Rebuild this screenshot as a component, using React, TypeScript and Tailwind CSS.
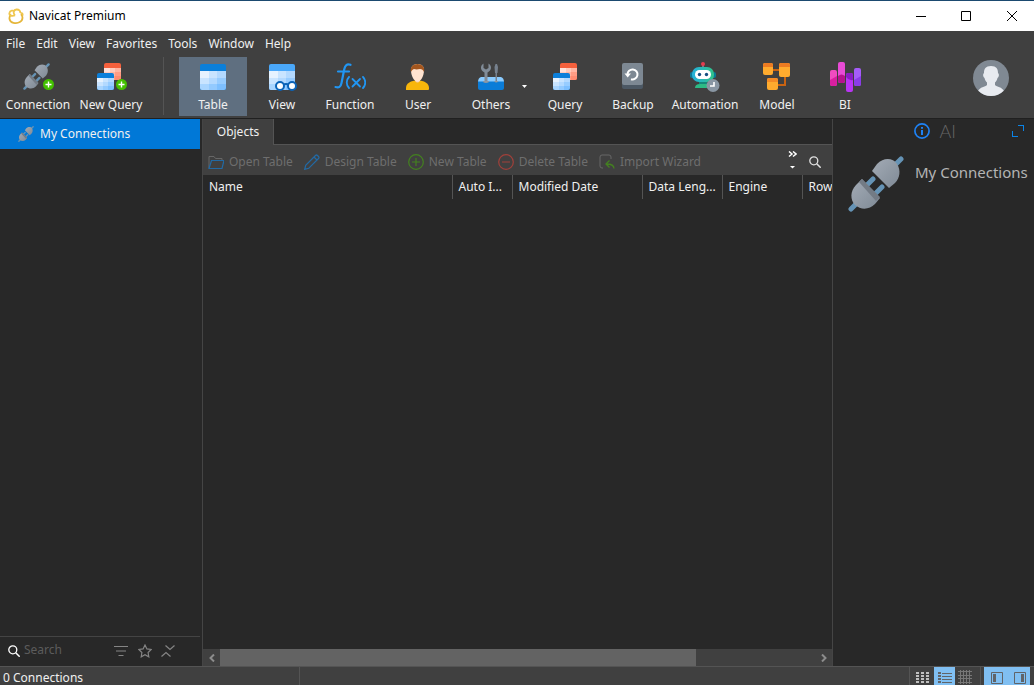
import type { ReactNode } from "react"
import clsx from "clsx"

function PlugIcon({ className }: { className?: string }) {
  return (
    <svg viewBox="0 0 56 56" className={className} fill="none" aria-hidden="true">
      <defs>
        <linearGradient id="plug" x1="0" y1="0" x2="1" y2="1">
          <stop offset="0" stopColor="#a3abb5" />
          <stop offset="1" stopColor="#7f8a96" />
        </linearGradient>
      </defs>
      <path d="M3 53l6-6M47 9l6-6M19 29l6-6M28 37l6-6" stroke="#6593b5" strokeWidth="5" strokeLinecap="round" />
      <path d="M24 15 29 8C36 1 45 2 49 8c4 6 3 14-2 19l-6 5z" fill="url(#plug)" />
      <path d="M14 23 8 29C2 35 2 44 7 49c6 5 14 5 20-1l5-6z" fill="url(#plug)" />
      <path d="M11 26l3-3 18 18-4 4z" fill="#737b85" />
    </svg>
  )
}

function TableGrid({ x, y, size, color = "blue" }: { x: number; y: number; size: number; color?: "blue" | "red" | "sky" }) {
  const head = { blue: "#0b7fda", red: "#f5603c", sky: "#4aa8fa" }[color]
  const cells =
    color === "red"
      ? ["#ffe2da", "#ffcbbd", "#ffb5a2", "#ffcbbd", "#ffb5a2", "#ff9c84", "#ffb5a2", "#ff9c84", "#ff8c72"]
      : ["#e6f2ff", "#c9e4ff", "#b3d9ff", "#c9e4ff", "#b3d9ff", "#97ccff", "#a9d5ff", "#93caff", "#7dbfff"]
  const top = size * 0.28
  const w = size / 3
  const h = (size - top) / 3
  const clip = `grid-${color}-${x}-${y}-${size}`
  return (
    <g>
      <clipPath id={clip}>
        <rect x={x} y={y} width={size} height={size} rx="2" />
      </clipPath>
      <g clipPath={`url(#${clip})`} shapeRendering="crispEdges">
        <rect x={x} y={y} width={size} height={size} fill={head} />
        {cells.map((fill, i) => (
          <rect key={i} x={x + (i % 3) * w} y={y + top + Math.floor(i / 3) * h} width={w} height={h} fill={fill} />
        ))}
      </g>
    </g>
  )
}

function PlusBadge() {
  return (
    <>
      <circle cx="26.5" cy="23.5" r="5.5" fill="#43c000" />
      <path d="M26.5 20.500v6M23.500 23.500h6" stroke="#fff" strokeWidth="1.4" />
    </>
  )
}

function Icon({ children }: { children: ReactNode }) {
  return (
    <svg viewBox="0 0 32 32" className="size-8 shrink-0" fill="none" aria-hidden="true">
      {children}
    </svg>
  )
}

const ConnectionIcon = (
  <Icon>
    <svg x="1" y="2" width="27" height="27">
      <PlugIcon />
    </svg>
    <PlusBadge />
  </Icon>
)

const NewQueryIcon = (
  <Icon>
    <TableGrid x={9} y={2} size={17} color="red" />
    <TableGrid x={2} y={12} size={17} />
    <PlusBadge />
  </Icon>
)

const TableIcon = (
  <Icon>
    <TableGrid x={3} y={3} size={26} />
  </Icon>
)

const ViewIcon = (
  <Icon>
    <TableGrid x={3} y={3} size={26} color="sky" />
    <g fill="#fff" stroke="#0a63b8" strokeWidth="2">
      <path d="M17 24q3-2 6 0" fill="none" />
      <circle cx="14" cy="25" r="4" />
      <circle cx="26" cy="25" r="4" />
    </g>
  </Icon>
)

const FunctionIcon = (
  <Icon>
    <g stroke="#2196f3" strokeWidth="2.2" strokeLinecap="round">
      <path d="M16.500 3.800C13 2.600 11 4 10.200 8.500L7.500 22c-.8 4-2.500 5-6 4M4 10.500h11" />
      <path d="M15 16c-3 3-3 8 0 11M29 16c3 3 3 8 0 11" strokeWidth="1.800" />
      <path d="M18.500 18l7.500 7.500M26 18l-7.500 7.500" strokeWidth="1.800" />
    </g>
  </Icon>
)

const UserIcon = (
  <Icon>
    <path d="M4 29v-2c0-5 5-7.500 11.500-7.500S27 22 27 27v1q0 1-1 1z" fill="#f8b60b" />
    <path d="M13 17h5v3q-2.500 3-5 0z" fill="#f6cfa8" />
    <path d="M9 9c0-4 3-6 6.500-6S22 5 22 9c0 6-3 11.500-6.500 11.500S9 15 9 9z" fill="#ffe3d0" />
    <path d="M9 11C7.800 6 11 3 15.500 3S23.200 6 22 11c-.8-2-2-3-4-3-3 .5-4 .5-6 0-1.500.5-2.500 1.500-3 3z" fill="#a3561e" />
  </Icon>
)

const OthersIcon = (
  <Icon>
    <path d="M6 16h20q3 1 3 5H3q0-4 3-5z" fill="#8acbff" />
    <path
      d="M9.500 22V11.500C5 9.500 5 4.500 8.500 2.500v4.500l2.500 1.500L13.500 7V2.500c3.500 2 3.500 7-1 9V22z"
      fill="#818c98"
    />
    <path d="M20.500 3h1.500l1 3-.500 6h-.500v9h-1.500v-9H20l-.5-6z" fill="#76818e" />
    <path d="M3 20.500h26V27q0 2-2 2H5q-2 0-2-2z" fill="#0a7cd8" />
    <path d="M8 20h6v1q-3 2-6 0zM19 20h4.500q-2.300 3-4.500 0z" fill="#8d97a3" />
  </Icon>
)

const QueryIcon = (
  <Icon>
    <TableGrid x={11} y={2} size={17} color="red" />
    <TableGrid x={4} y={12} size={17} />
  </Icon>
)

const BackupIcon = (
  <Icon>
    <rect x="5" y="8" width="21" height="20" rx="2" fill="#4c5864" />
    <rect x="5" y="2" width="21" height="22" rx="2" fill="#7d8893" />
    <path d="M10.500 13.500A5 5 0 1 1 14 18.200" stroke="#fff" strokeWidth="2" />
    <path d="M7.500 12.500h6.500l-3.300 4z" fill="#fff" />
  </Icon>
)

const AutomationIcon = (
  <Icon>
    <path d="M14 3v5" stroke="#8a949e" strokeWidth="1.500" />
    <circle cx="14" cy="3" r="2" fill="#e43d4f" />
    <rect x="1" y="11" width="26" height="6" rx="2" fill="#0b7895" />
    <linearGradient id="robot">
      <stop offset="0" stopColor="#24b0dc" />
      <stop offset="1" stopColor="#30c389" />
    </linearGradient>
    <rect x="3" y="6" width="22" height="15" rx="7" fill="url(#robot)" />
    <rect x="6" y="9" width="16" height="9" rx="4.500" fill="#fff" />
    <circle cx="10.500" cy="13.500" r="1.700" fill="#164f82" />
    <circle cx="17.500" cy="13.500" r="1.700" fill="#164f82" />
    <path d="M10 21h8v2H10z" fill="#15877a" />
    <path d="M6 27q0-4 5-4h8v4z" fill="#2cba85" />
    <circle cx="24" cy="24.500" r="6.500" fill="#8996a3" />
    <path d="M25 21v4h-4" stroke="#fff" strokeWidth="1.600" />
  </Icon>
)

const ModelIcon = (
  <Icon>
    <path d="M12 9h6M24 14v10h-7" stroke="#c96312" strokeWidth="2" />
    <rect x="2" y="2" width="10" height="12" rx="2" fill="#ffab2e" />
    <path d="M2 4q0-2 2-2h6q2 0 2 2v2H2z" fill="#ec7b22" />
    <rect x="18" y="2" width="11" height="14" rx="2" fill="#ffab2e" />
    <path d="M18 4q0-2 2-2h7q2 0 2 2v2H18z" fill="#ec7b22" />
    <rect x="6" y="17" width="11" height="12" rx="2" fill="#ffab2e" />
    <path d="M6 19q0-2 2-2h7q2 0 2 2v2H6z" fill="#f58a25" />
  </Icon>
)

const BiIcon = (
  <Icon>
    <rect x="1" y="9" width="7" height="16" rx="2" fill="#f04bc0" />
    <path d="M1 19l7-4v8q0 2-2 2H3q-2 0-2-2z" fill="#d81fa0" />
    <rect x="9" y="1" width="7" height="21" rx="2" fill="#e94bd6" />
    <path d="M9 15q3.500-3 7 0v5q0 2-2 2h-3q-2 0-2-2z" fill="#b8128e" />
    <rect x="17" y="12" width="7" height="19" rx="2" fill="#b935f4" />
    <path d="M17 14q0-2 2-2h3q2 0 2 2v5q-4 1-7-3z" fill="#8a1cc4" />
    <rect x="25" y="7" width="7" height="18" rx="2" fill="#a55cf8" />
    <path d="M25 19l7-4v8q0 2-2 2h-3q-2 0-2-2z" fill="#8a3ce8" />
  </Icon>
)

const objectTypes = [
  { label: "Table", icon: TableIcon, width: "w-[68px]", active: true },
  { label: "View", icon: ViewIcon, width: "w-[70px]" },
  { label: "Function", icon: FunctionIcon, width: "w-[66px]" },
  { label: "User", icon: UserIcon, width: "w-[70px]" },
  { label: "Others", icon: OthersIcon, width: "w-[76px]", menu: true },
  { label: "Query", icon: QueryIcon, width: "w-[72px]" },
  { label: "Backup", icon: BackupIcon, width: "w-16" },
  { label: "Automation", icon: AutomationIcon, width: "w-20" },
  { label: "Model", icon: ModelIcon, width: "w-16" },
  { label: "BI", icon: BiIcon, width: "w-[72px]" },
]

type ToolButtonProps = { label: string; icon: ReactNode; width: string; active?: boolean; menu?: boolean }

function ToolButton({ label, icon, width, active, menu }: ToolButtonProps) {
  return (
    <button
      type="button"
      className={clsx(
        "relative flex h-[59px] shrink-0 flex-col items-center gap-1 pt-1 whitespace-nowrap",
        width,
        active && "bg-[#5f6f80]",
      )}
    >
      {icon}
      <span>{label}</span>
      {menu && (
        <svg viewBox="0 0 5 3" className="absolute top-7 right-0.5 h-[3px] w-[5px]" aria-hidden="true">
          <path d="M0 0h5L2.500 3z" fill="#fff" />
        </svg>
      )}
    </button>
  )
}

function TitleBar() {
  return (
    <header className="flex h-[31px] shrink-0 items-center border-t border-[#1b4a70] bg-white pl-2 text-black">
      <svg viewBox="0 0 16 16" className="size-4" fill="none" stroke="#efc64e" strokeWidth="1.800" aria-hidden="true">
        <path d="M3.200 6.500C.3 9 1 13.800 5.500 14.800c5 1 9-1.300 9-5 0-1.500-.5-2.800-1.500-3.800" stroke="#e5b63a" />
        <path d="M7 7.500C3 8.800.8 7 1.500 4.800 2 2.500 5 2 7 3.500M7 7.500C4.800 5 5.500 1.800 8.500 1.500c2.500-.2 4 1.500 3.800 3.500M12.300 5c1.500-.500 2.700.500 2.200 2.500" />
      </svg>
      <h1 className="ml-[5px] flex-1">Navicat Premium</h1>
      <button type="button" aria-label="Minimize" className="flex h-full w-[45px] items-center justify-center">
        <svg viewBox="0 0 10 10" className="size-[10px]" stroke="#000" shapeRendering="crispEdges">
          <path d="M0 5.500h10" />
        </svg>
      </button>
      <button type="button" aria-label="Maximize" className="flex h-full w-[46px] items-center justify-center">
        <svg viewBox="0 0 10 10" className="size-[10px]" fill="none" stroke="#000">
          <path d="M.5.5h9v9h-9z" />
        </svg>
      </button>
      <button type="button" aria-label="Close" className="flex h-full w-[45px] items-center justify-center">
        <svg viewBox="0 0 10 10" className="size-[10px]" stroke="#000">
          <path d="M0 0l10 10M10 0L0 10" />
        </svg>
      </button>
    </header>
  )
}

function MainToolbar() {
  return (
    <div className="flex h-[61px] shrink-0 items-start bg-[#404040] pl-0.5">
      <ToolButton label="Connection" icon={ConnectionIcon} width="w-[72px]" />
      <ToolButton label="New Query" icon={NewQueryIcon} width="w-[74px]" />
      <div className="mx-[15px] h-[58px] w-px shrink-0 bg-[#545454]" />
      {objectTypes.map((item) => (
        <ToolButton key={item.label} {...item} />
      ))}
      <button type="button" aria-label="Account" className="mt-[3px] mr-[25px] ml-auto shrink-0">
        <svg viewBox="0 0 36 36" className="size-9">
          <clipPath id="avatar">
            <circle cx="18" cy="18" r="18" />
          </clipPath>
          <g clipPath="url(#avatar)">
            <rect width="36" height="36" fill="#808993" />
            <path
              d="M18 6c5.500 0 7 3 7 7 1.500 1 1 4-.5 5-.5 2-1.500 3.500-2.500 4.500V25c2 2 7 2 9 6v5H5v-5c2-4 7-4 9-6v-2.500c-1-1-2-2.500-2.500-4.500-1.500-1-2-4-.5-5 0-4 1.500-7 7-7z"
              fill="#e8ebf0"
            />
          </g>
        </svg>
      </button>
    </div>
  )
}

function SearchGlyph({ className }: { className?: string }) {
  return (
    <svg viewBox="0 0 12 12" className={clsx("size-3 shrink-0", className)} fill="none" stroke="currentColor" aria-hidden="true">
      <circle cx="4.800" cy="4.800" r="4" strokeWidth="1.300" />
      <path d="M7.700 7.700l4 4" strokeWidth="1.500" />
    </svg>
  )
}

function Sidebar() {
  return (
    <aside className="flex w-[202px] shrink-0 flex-col pr-0.5">
      <button type="button" className="flex h-[30px] items-center bg-[#0078d7] pl-[18px]">
        <PlugIcon className="size-4" />
        <span className="ml-1.5">My Connections</span>
      </button>
      <div className="mt-auto flex h-[30px] items-center border-t border-[#444] pb-px pl-2 text-[#858585]">
        <SearchGlyph className="text-white" />
        <input
          type="text"
          aria-label="Search"
          placeholder="Search"
          className="ml-1 w-[90px] bg-transparent pb-0.5 outline-none placeholder:text-[#5c5c5c]"
        />
        <button type="button" aria-label="Filter">
          <svg viewBox="0 0 14 10" className="h-[10px] w-[14px]" stroke="currentColor">
            <path d="M0 .5h14M2 5h10M4.500 9.500h5" />
          </svg>
        </button>
        <button type="button" aria-label="Favorites" className="ml-2.5">
          <svg viewBox="0 0 14 14" className="size-[14px]" fill="none" stroke="currentColor" strokeWidth="1.200">
            <path d="M7 1l1.900 3.900 4.300.600-3.100 3 .7 4.300L7 10.800l-3.800 2 .7-4.300-3.100-3 4.300-.6z" />
          </svg>
        </button>
        <button type="button" aria-label="Collapse all" className="ml-[9px]">
          <svg viewBox="0 0 14 14" className="size-[14px]" fill="none" stroke="currentColor" strokeWidth="1.200">
            <path d="M4.500 1.500l4.500 4 4.500-4M.5 12.500l4.500-4 4.500 4" />
          </svg>
        </button>
      </div>
    </aside>
  )
}

const actions = [
  {
    label: "Open Table",
    icon: (
      <>
        <path d="M1 14V2.500h5l1.500 2H14V6" stroke="#676767" />
        <path d="M1 14.500l2.500-8H16l-2 8z" stroke="#226aa5" strokeWidth="1.200" />
      </>
    ),
  },
  {
    label: "Design Table",
    icon: (
      <path d="M.7 15.300l1-4L11.500 1.500q1-1 2 0l1 1q1 1 0 2l-9.800 9.800zM10 3l3 3" stroke="#226aa5" strokeWidth="1.200" />
    ),
  },
  {
    label: "New Table",
    icon: (
      <path d="M8 .7a7.300 7.300 0 1 0 0 14.600A7.300 7.300 0 0 0 8 .7zM8 4v8M4 8h8" stroke="#43811f" strokeWidth="1.200" />
    ),
  },
  {
    label: "Delete Table",
    icon: <path d="M8 .7a7.300 7.300 0 1 0 0 14.600A7.300 7.300 0 0 0 8 .7zM4 8h8" stroke="#a0403a" strokeWidth="1.200" />,
  },
  {
    label: "Import Wizard",
    icon: (
      <>
        <path d="M4 14H3q-2 0-2-2V3q0-2 2-2h7q2 0 2 2v2" stroke="#676767" />
        <path d="M15 14.500c0-3-2-4.500-7.500-4.500M10.500 6.500L7 10l3.500 3.500" stroke="#43811f" strokeWidth="1.300" />
      </>
    ),
  },
]

const columns = [
  { label: "Name", width: "w-[249px]" },
  { label: "Auto Increment Value", width: "w-[60px]", short: "Auto I..." },
  { label: "Modified Date", width: "w-[130px]" },
  { label: "Data Length", width: "w-[80px]", short: "Data Leng..." },
  { label: "Engine", width: "w-[80px]" },
  { label: "Rows", width: "w-[80px]" },
]

function ObjectsPane() {
  return (
    <main className="flex min-w-0 flex-1 flex-col border-x border-[#454545]">
      <div role="tablist" className="flex h-[26px] shrink-0">
        <button type="button" role="tab" aria-selected="true" className="w-[71px] border-r border-[#545454] bg-[#404040]">
          Objects
        </button>
        <div className="flex-1 border-b border-[#545454]" />
      </div>
      <div className="flex h-[30px] shrink-0 items-center bg-[#404040] pt-1 pl-[5px] text-[#6e6e6e]">
        <div className="flex min-w-0 gap-[11px] overflow-hidden">
          {actions.map(({ label, icon }) => (
            <button key={label} type="button" disabled className="flex shrink-0 items-center gap-[5px] whitespace-nowrap">
              <svg viewBox="0 0 16 16" className="size-4" fill="none" aria-hidden="true">
                {icon}
              </svg>
              {label}
            </button>
          ))}
        </div>
        <button type="button" aria-label="More actions" className="ml-auto pb-1">
          <svg viewBox="0 0 9 18" className="h-[18px] w-[9px]" fill="none" stroke="#fff" strokeWidth="1.500">
            <path d="M1 .5l3 2.500-3 2.500M5 .5l3 2.500-3 2.500" />
            <path d="M2 15h5l-2.500 2.500z" fill="#fff" stroke="none" />
          </svg>
        </button>
        <button type="button" aria-label="Find object" className="mr-[11px] ml-3 text-[#e0e0e0]">
          <SearchGlyph />
        </button>
      </div>
      <div className="flex-1 overflow-hidden">
        <table className="w-[679px] table-fixed border-collapse text-left">
          <thead>
            <tr className="h-6">
              {columns.map(({ label, width, short }) => (
                <th
                  key={label}
                  title={label}
                  className={clsx("border-r border-[#545454] p-0 pl-1.5 font-normal whitespace-nowrap", width)}
                >
                  {short ?? label}
                </th>
              ))}
            </tr>
          </thead>
        </table>
      </div>
      <div className="flex h-[17px] shrink-0 items-center bg-[#404040] text-[#8c8c8c]">
        <button type="button" aria-label="Scroll left" className="flex w-[17px] shrink-0 justify-center">
          <svg viewBox="0 0 6 8" className="h-2 w-1.5" fill="none" stroke="currentColor" strokeWidth="2">
            <path d="M5 .5L1.500 4 5 7.500" />
          </svg>
        </button>
        <div className="h-full flex-1">
          <div className="h-full w-4/5 bg-[#636363]" />
        </div>
        <button type="button" aria-label="Scroll right" className="flex w-[17px] shrink-0 justify-center">
          <svg viewBox="0 0 6 8" className="h-2 w-1.5" fill="none" stroke="currentColor" strokeWidth="2">
            <path d="M1 .5L4.500 4 1 7.500" />
          </svg>
        </button>
      </div>
    </main>
  )
}

function InfoPane() {
  return (
    <aside className="w-[201px] shrink-0">
      <div className="flex h-6 items-center pr-2.5">
        <button type="button" aria-label="Information" className="ml-auto">
          <svg viewBox="0 0 16 16" className="size-4" fill="none" stroke="#1e82f5" strokeWidth="1.700">
            <circle cx="8" cy="8" r="7.100" />
            <path d="M8 7v5M8 4v1.800" strokeWidth="2" />
          </svg>
        </button>
        <button type="button" className="ml-2.5 font-['Lato'] text-lg leading-6 font-light text-[#666]">
          AI
        </button>
        <button type="button" aria-label="Expand" className="ml-14">
          <svg viewBox="0 0 12 12" className="size-3" fill="none" stroke="#0a84e8" shapeRendering="crispEdges">
            <path d="M6 .5h5.500V6M.5 6v5.500H6" />
          </svg>
        </button>
      </div>
      <div className="flex pt-[13px] pl-[15px]">
        <PlugIcon className="size-14 shrink-0" />
        <h2 className="ml-[11px] pt-1 text-[15px] leading-6 whitespace-nowrap text-[#b4b4b4]">My Connections</h2>
      </div>
    </aside>
  )
}

function StatusBar() {
  return (
    <footer className="flex h-[19px] shrink-0 items-stretch overflow-hidden border-t border-[#545454] bg-[#404040]">
      <span className="w-[300px] border-r border-[#545454] pt-[3px] pl-[3px]">0 Connections</span>
      <div className="ml-auto flex border-l border-[#545454] pl-[3px]">
        <button type="button" aria-label="List" className="flex w-[21px] items-center justify-center pt-1 pr-0.5">
          <svg viewBox="0 0 13 12" className="h-3 w-[13px]" fill="#c0c0c0" shapeRendering="crispEdges">
            {[0, 3, 6, 9].map((y) => (
              <path key={y} d={`M0 ${y}h3v2H0zM5 ${y}h3v2H5zM10 ${y}h3v2h-3z`} />
            ))}
          </svg>
        </button>
        <button type="button" aria-label="Detail" aria-pressed="true" className="flex w-[21px] items-center justify-center bg-[#80bff2] pt-1">
          <svg viewBox="0 0 14 12" className="h-3 w-[14px]" fill="#606469" shapeRendering="crispEdges">
            {[0, 3, 6, 9].map((y) => (
              <path key={y} d={`M0 ${y}h3v2H0zM4 ${y + 1}h10v1H4z`} />
            ))}
          </svg>
        </button>
        <button type="button" aria-label="ER diagram" className="flex w-[21px] items-center justify-center pt-0.5 pr-0.5">
          <svg viewBox="0 0 14 14" className="size-[14px]" stroke="#777" shapeRendering="crispEdges">
            <path d="M0 1.500h14M0 5.500h14M0 8.500h14M0 12.500h14M2.500 0v14M5.500 0v14M8.500 0v14M11.500 0v14" />
          </svg>
        </button>
      </div>
      <div className="ml-1 border-l border-[#545454] pr-1 pl-[3px]">
        <div className="flex h-full bg-[#80bff2]">
          <button type="button" aria-label="Navigation pane" aria-pressed="true" className="flex w-6 items-center justify-center pt-1 pl-0.5">
            <svg viewBox="0 0 12 12" className="size-3" fill="none" stroke="#606469">
              <path d="M.5.5h11v11H.5z" />
              <path d="M2 2h3v8H2z" fill="#606469" stroke="none" />
            </svg>
          </button>
          <button type="button" aria-label="Information pane" aria-pressed="true" className="flex w-[22px] items-center justify-center pt-1 pl-0.5">
            <svg viewBox="0 0 12 12" className="size-3" fill="none" stroke="#606469">
              <path d="M.5.5h11v11H.5z" />
              <path d="M7 2h3v8H7z" fill="#606469" stroke="none" />
            </svg>
          </button>
        </div>
      </div>
    </footer>
  )
}

const menus = ["File", "Edit", "View", "Favorites", "Tools", "Window", "Help"]

export default function App() {
  return (
    <div className="flex h-screen flex-col overflow-hidden bg-[#282828] font-['Noto_Sans',sans-serif] text-xs leading-4 text-[#f0f0f0]">
      <TitleBar />
      <nav className="flex h-[26px] shrink-0 items-center gap-[11px] bg-[#404040] pl-1.5">
        {menus.map((menu) => (
          <button key={menu} type="button">
            {menu}
          </button>
        ))}
      </nav>
      <MainToolbar />
      <div className="flex min-h-0 flex-1 border-t border-[#202020]">
        <Sidebar />
        <ObjectsPane />
        <InfoPane />
      </div>
      <StatusBar />
    </div>
  )
}
